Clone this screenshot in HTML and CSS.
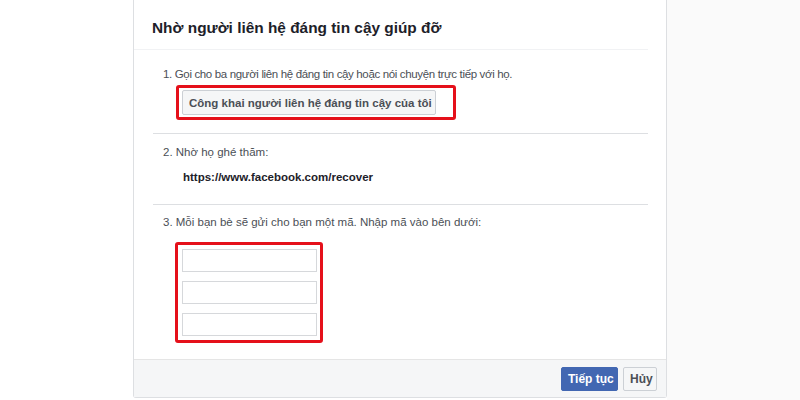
FILE: index.html
```html
<!DOCTYPE html>
<html lang="vi">
<head>
<meta charset="utf-8">
<link rel="stylesheet" href="styles.css">
</head>
<body>
<div class="page">
  <div class="left-space"></div>
  <div class="dialog">
    <div class="title">Nhờ người liên hệ đáng tin cậy giúp đỡ</div>
    <div class="body">
      <div class="section s1">
        <div class="step step1">1. Gọi cho ba người liên hệ đáng tin cậy hoặc nói chuyện trực tiếp với họ.</div>
        <div class="mark mark-btn">
          <button class="btn-plain">Công khai người liên hệ đáng tin cậy của tôi</button>
        </div>
      </div>
      <div class="section s2">
        <div class="step">2. Nhờ họ ghé thăm:</div>
        <div class="url">https://www.facebook.com/recover</div>
      </div>
      <div class="section s3">
        <div class="step">3. Mỗi bạn bè sẽ gửi cho bạn một mã. Nhập mã vào bên dưới:</div>
        <div class="mark mark-inputs">
          <input class="code" type="text">
          <input class="code" type="text">
          <input class="code" type="text">
        </div>
      </div>
    </div>
    <div class="footer">
      <button class="btn-primary">Tiếp tục</button>
      <button class="btn-cancel">Hủy</button>
    </div>
  </div>
  <div class="right-space"></div>
</div>
</body>
</html>
```

FILE: styles.css
```css
* { box-sizing: border-box; }
html, body { margin: 0; padding: 0; }
body {
  font-family: "Liberation Sans", Arial, sans-serif;
  background: #ffffff;
  width: 800px;
  height: 400px;
  overflow: hidden;
}
.page {
  display: flex;
  height: 400px;
}
.left-space { width: 133px; flex: none; background: #ffffff; }
.right-space { flex: 1; background: #fafafa; }
.dialog {
  width: 534px;
  flex: none;
  height: 398px;
  background: #ffffff;
  border: 1px solid #dddfe2;
  border-top: none;
  border-radius: 0 0 3px 3px;
  display: flex;
  flex-direction: column;
}
.title {
  height: 50px;
  padding: 18px 0 0 18px;
  font-size: 15.4px;
  line-height: 20px;
  font-weight: bold;
  color: #1d2129;
  margin: 0 18px 0 0;
  border-bottom: 1px solid #f1f2f4;
  white-space: nowrap;
}
.body {
  flex: 1;
  padding: 0 18px 0 19px;
}
.section {
  border-bottom: 1px solid #dddfe2;
  padding-left: 10px;
}
.s1 { padding-top: 16px; height: 84px; }
.s2 { padding-top: 10px; height: 71px; }
.s3 { padding-top: 9px; border-bottom: none; }
.step {
  font-size: 11.5px;
  line-height: 16px;
  color: #4b4f56;
  white-space: nowrap;
}
.step1 { letter-spacing: -0.35px; }
.mark {
  display: inline-block;
  border: 3px solid #e5101a;
  border-radius: 3px;
}
.mark-btn {
  margin: 3px 0 0 13px;
  padding: 2px 17px 2px 3px;
}
.btn-plain {
  display: block;
  height: 25px;
  width: 254px;
  padding: 0 6px;
  font-family: "Liberation Sans", Arial, sans-serif;
  font-size: 11.5px;
  font-weight: bold;
  color: #4b4f56;
  background: #f5f6f7;
  border: 1px solid #ccd0d5;
  border-radius: 2px;
  white-space: nowrap;
}
.url {
  margin: 9px 0 0 20px;
  font-size: 11.5px;
  line-height: 16px;
  font-weight: bold;
  color: #1d2129;
}
.mark-inputs {
  margin: 12px 0 0 12px;
  padding: 4px 3px 4px 4px;
  display: inline-flex;
  flex-direction: column;
  gap: 9px;
}
.code {
  display: block;
  width: 135px;
  height: 23px;
  border: 1px solid #d6d8db;
  background: #fff;
  margin: 0;
  padding: 0;
}
.footer {
  height: 38px;
  background: #f5f6f7;
  border-top: 1px solid #e5e5e5;
  display: flex;
  justify-content: flex-end;
  align-items: center;
  gap: 5px;
  padding-right: 9px;
}
.btn-primary, .btn-cancel {
  height: 24px;
  font-family: "Liberation Sans", Arial, sans-serif;
  font-size: 12px;
  font-weight: bold;
  border-radius: 2px;
  padding: 0 6px;
  white-space: nowrap;
}
.btn-primary {
  width: 57px;
  background: #4267b2;
  color: #ffffff;
  border: 1px solid #4267b2;
}
.btn-cancel {
  width: 34px;
  background: #f5f6f7;
  color: #4b4f56;
  border: 1px solid #ccd0d5;
}
```
